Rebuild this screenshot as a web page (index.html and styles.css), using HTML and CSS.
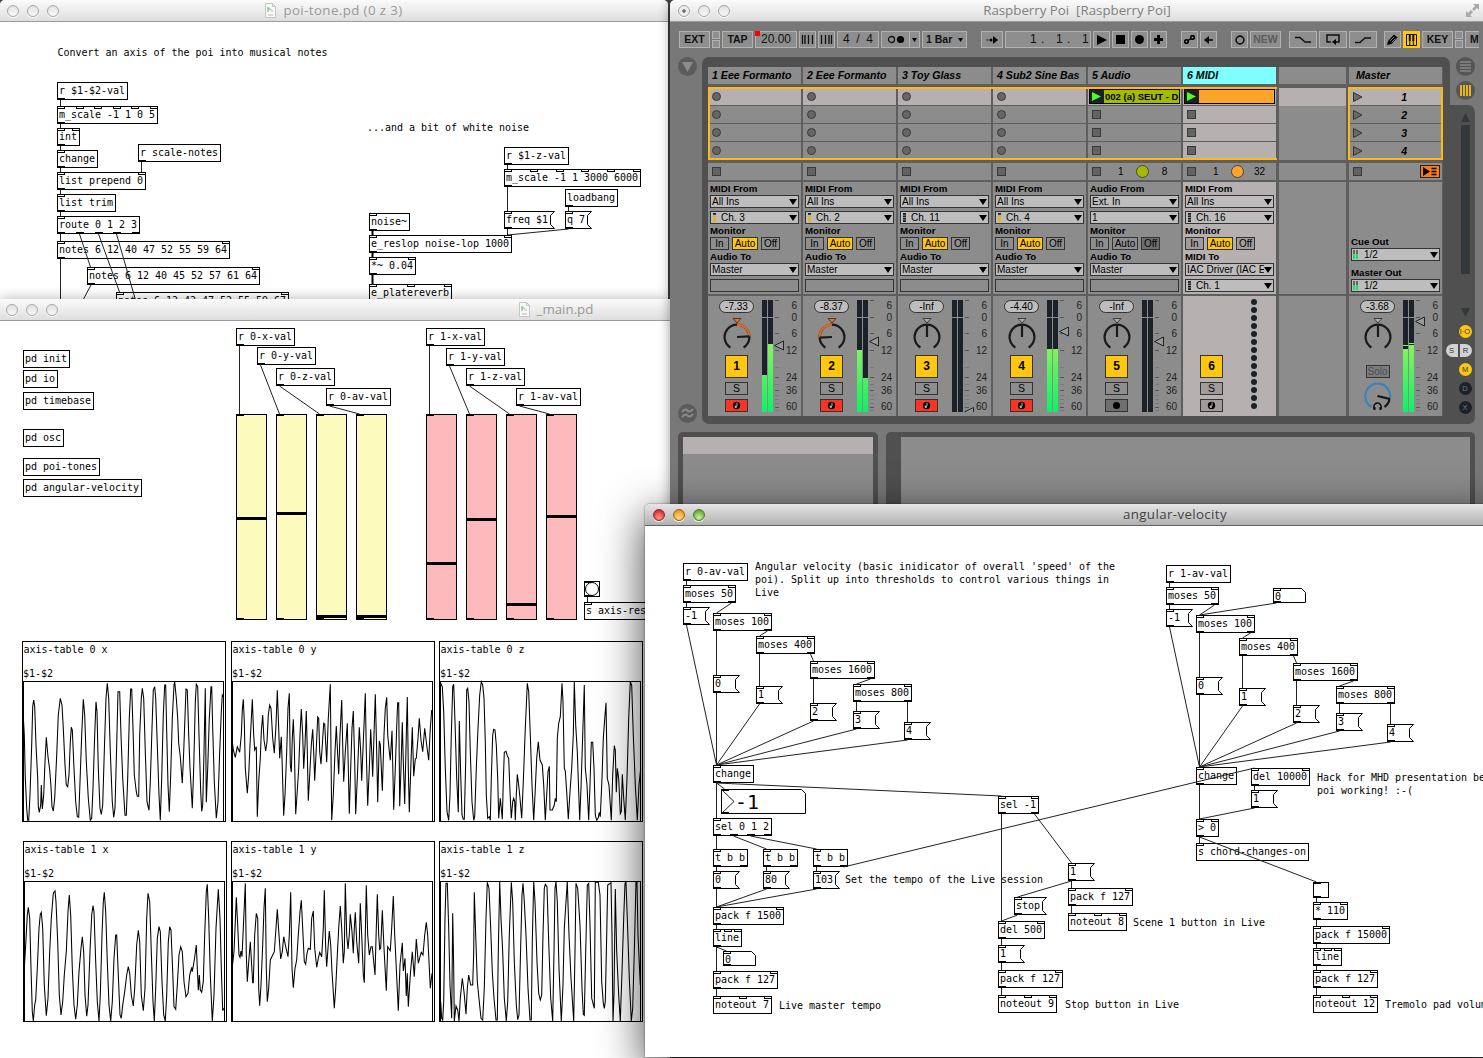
FILE: index.html
```html
<!DOCTYPE html>
<html lang="en">
<head>
<meta charset="utf-8">
<title>Desktop</title>
<link rel="stylesheet" href="styles.css">
</head>
<body>
<div class="desktop">

  <section class="window win-tone">
    <header class="titlebar">
      <div class="lights"><i></i><i></i><i></i></div>
      <h1><svg class="doc" width="11" height="15" viewBox="0 0 11 15"><path d="M.5.5h7l3 3v11H.5z" fill="#fafafa" stroke="#c4c4c4"/><path d="M7.500.5v3h3" fill="none" stroke="#c4c4c4"/><path d="M3 4v5M3 5l3 2" stroke="#8fc79a" fill="none" stroke-width="1.500"/><path d="M6 8h2M3 12h5" stroke="#b5b5b5"/></svg>poi-tone.pd (0 z 3)</h1>
    </header>
    <svg class="patch" id="patch-tone" viewBox="0 22 668 277" width="668" height="277"></svg>
  </section>

  <section class="window win-main">
    <header class="titlebar">
      <div class="lights"><i></i><i></i><i></i></div>
      <h1><svg class="doc" width="11" height="15" viewBox="0 0 11 15"><path d="M.5.5h7l3 3v11H.5z" fill="#fafafa" stroke="#c4c4c4"/><path d="M7.500.5v3h3" fill="none" stroke="#c4c4c4"/><path d="M3 4v5M3 5l3 2" stroke="#8fc79a" fill="none" stroke-width="1.500"/><path d="M6 8h2M3 12h5" stroke="#b5b5b5"/></svg>_main.pd</h1>
    </header>
    <svg class="patch" id="patch-main" viewBox="0 321 670 737" width="670" height="737"></svg>
  </section>

  <section class="window win-live">
    <header class="titlebar">
      <div class="lights"><i class="dirty"></i><i></i><i></i></div>
      <h1>Raspberry Poi&nbsp; [Raspberry Poi]</h1>
      <svg class="full" width="15" height="15" viewBox="0 0 15 15"><path d="M8 1h6v6l-2-2-3 3-2-2 3-3zM7 14H1V8l2 2 3-3 2 2-3 3z" fill="#a9a9a9"/></svg>
    </header>
    <div class="toolbar">
      <span class="b w31">EXT</span>
      <span class="nudge"><i></i><i></i></span>
      <span class="b w31">TAP</span>
      <span class="b w42 num tempo">20.00</span>
      <span class="b w17"><svg width="13" height="9"><path d="M1.500 0v9M4 0v9M7.500 0v9M11.500 0v9" stroke="#111" stroke-width="1.300"/></svg></span>
      <span class="b w17"><svg width="13" height="9"><path d="M1.500 0v9M5.500 0v9M9 0v9M11.500 0v9" stroke="#111" stroke-width="1.300"/></svg></span>
      <span class="b w42 num">4&nbsp; /&nbsp; 4</span>
      <span class="b w28 join"><svg width="18" height="9"><circle cx="4.500" cy="4.500" r="3" fill="none" stroke="#111" stroke-width="1.300"/><circle cx="13.500" cy="4.500" r="3.600"/></svg></span><span class="b w11 joined"><svg width="5" height="4"><path d="M0 0h5L2.500 4z"/></svg></span>
      <span class="b w45 spread">1 Bar <svg width="5" height="4"><path d="M0 0h5L2.500 4z"/></svg></span>
      <span class="b w22 gap-a"><svg width="14" height="8"><circle cx="2.500" cy="4" r="1.300" fill="#555"/><circle cx="6" cy="4" r="1.500"/><path d="M8 0l5 4-5 4z"/></svg></span>
      <span class="b w86 num pos"><span>1 .</span><span>1 .</span><span>1</span></span>
      <span class="b w17"><svg width="10" height="10"><path d="M0 0l10 5-10 5z"/></svg></span>
      <span class="b w17"><svg width="9" height="9"><path d="M0 0h9v9H0z"/></svg></span>
      <span class="b w17"><svg width="9" height="9"><circle cx="4.500" cy="4.500" r="4.500"/></svg></span>
      <span class="b w17"><svg width="9" height="9"><path d="M4.500 0v9M0 4.500h9" stroke="#000" stroke-width="3"/></svg></span>
      <span class="b w17 gap-a"><svg width="11" height="9"><circle cx="2.500" cy="6.500" r="1.800" fill="none" stroke="#000" stroke-width="1.600"/><circle cx="8.500" cy="2.500" r="1.800" fill="none" stroke="#000" stroke-width="1.600"/><path d="M4 5.500l3-2" stroke="#000" stroke-width="1.500"/></svg></span>
      <span class="b w17"><svg width="10" height="8"><path d="M9 4H3" stroke="#000" stroke-width="1.500"/><path d="M5 0v8L0 4z"/></svg></span>
      <span class="b w17 gap-a"><svg width="10" height="10"><circle cx="5" cy="5" r="3.900" fill="none" stroke="#111" stroke-width="1.600"/></svg></span>
      <span class="b w31 dim">NEW</span>
      <span class="b w28 gap-b"><svg width="16" height="8"><path d="M0 1.500h5l5 4.500h6" fill="none" stroke="#111" stroke-width="1.500"/></svg></span>
      <span class="b w28"><svg width="14" height="11"><path d="M5 8H1V1h12v7H9" fill="none" stroke="#111" stroke-width="1.500"/><path d="M10 5v6L6 8z"/></svg></span>
      <span class="b w28"><svg width="16" height="8"><path d="M0 6.500h5l5-4.500h6" fill="none" stroke="#111" stroke-width="1.500"/></svg></span>
      <span class="b w17 gap-c"><svg width="11" height="11"><path d="M0 11l1-4 6-6.500 3.500 3L4.500 10z"/><path d="M3 7l4-4M4.500 8.500l4-4" stroke="#999" stroke-width=".8"/></svg></span>
      <span class="b w17 on"><svg width="11" height="12"><path d="M.5.5h10v11H.5z" fill="none" stroke="#111"/><path d="M3.800 6.500V12M7.300 6.500V12" stroke="#111"/><path d="M3.800 0v7M7.300 0v7" stroke="#111" stroke-width="2"/></svg></span>
      <span class="b w31">KEY</span>
      <span class="nudge"><i></i><i></i></span>
      <span class="b last">M</span>
    </div>

    <div class="upper">
      <div class="gutter">
        <svg width="19" height="19"><circle cx="9.500" cy="9.500" r="9.500" fill="#5b5b5b"/><path d="M4 5h11l-5.500 10z" fill="#8b8b8b"/></svg>
        <svg width="19" height="19"><circle cx="9.500" cy="9.500" r="9.500" fill="#5b5b5b"/><path d="M4 8q3-4 5.500-1.500T15 5M4 13q3-4 5.500-1.500T15 10" fill="none" stroke="#8b8b8b" stroke-width="2"/></svg>
      </div>
      <div class="session">
        <div class="tracks" id="tracks"></div>
        <div class="scene-outline tracks-outline"></div>
        <div class="scene-outline master-outline"></div>
      </div>
      <div class="side">
        <div class="views">
          <svg width="19" height="19"><circle cx="9.500" cy="9.500" r="9.500" fill="#555"/><path d="M4 5h11M4 8h11M4 11h11M4 14h11" stroke="#858585" stroke-width="1.300"/></svg>
          <svg width="19" height="19"><circle cx="9.500" cy="9.500" r="9.500" fill="#555"/><path d="M5 4v11M8 4v11M11 4v11M14 4v11" stroke="#ffc70f" stroke-width="1.700"/></svg>
        </div>
        <div class="rail">
          <svg width="9" height="9"><path d="M0 9h9L4.500 0z" fill="#33383a"/></svg>
          <div class="scroll"></div>
          <svg width="9" height="9"><path d="M0 0h9L4.500 9z" fill="#33383a"/></svg>
          <b class="dot y">I·O</b>
          <div class="sr"><b>S</b><b>R</b></div>
          <b class="dot y">M</b>
          <b class="dot k">D</b>
          <b class="dot k">X</b>
        </div>
      </div>
    </div>
    <div class="lower">
      <div class="clipview"><div></div></div>
      <div class="devices"><div></div></div>
    </div>
  </section>

  <section class="window win-angular">
    <header class="titlebar active">
      <div class="lights"><i class="r"></i><i class="o"></i><i class="g"></i></div>
      <h1>angular-velocity</h1>
    </header>
    <svg class="patch" id="patch-angular" viewBox="645 526 838 531" width="838" height="531"></svg>
  </section>
</div>
<script src="app.js"></script>
</body>
</html>
```
FILE: styles.css
```css
* { box-sizing: border-box; }
body { margin: 0; font-family: "Liberation Sans", Arial, sans-serif; }
.desktop { position: relative; width: 1483px; height: 1058px; overflow: hidden; background: #4a4a4a; }

/* windows */
.window { position: absolute; background: #fff; overflow: hidden; border-radius: 5px 5px 0 0; }
.win-tone { left: 0; top: 0; width: 668px; height: 305px; box-shadow: 0 4px 14px rgba(0,0,0,.45); }
.win-main { left: 0; top: 299px; width: 670px; height: 759px; box-shadow: 0 0 12px rgba(0,0,0,.3); border-radius: 0; }
.win-live { left: 670px; top: 0; width: 830px; height: 620px; background: #787878; box-shadow: 0 0 12px rgba(0,0,0,.4); }
.win-angular { left: 645px; top: 504px; width: 860px; height: 553px; box-shadow: 0 12px 45px rgba(0,0,0,.75), 0 0 2px rgba(0,0,0,.6); }
.titlebar { height: 22px; display: flex; align-items: center; position: relative; background: linear-gradient(#fbfbfb, #dedede); border-bottom: 1px solid #9b9b9b; color: #999; }
.titlebar.active { background: linear-gradient(#e6e6e6, #b1b1b1); border-bottom-color: #636363; color: #444; }
.titlebar h1 { margin: 0; flex: 1; display: flex; justify-content: center; align-items: center; gap: 7px; font: 400 13.300px/21px "Open Sans", sans-serif; }
.win-live .titlebar { color: #808080; }
.win-tone .titlebar h1 { letter-spacing: .4px; }
.win-angular .titlebar h1 { flex: none; width: 1058px; letter-spacing: .38px; }
.lights { display: flex; gap: 8px; padding-left: 7px; margin-right: -59px; }
.lights i { width: 12px; height: 12px; border-radius: 50%; border: 1px solid #a5a5a5; background: linear-gradient(#e2e2e2, #f8f8f8); box-shadow: 0 1px 0 #fff; }
.win-main .lights { padding-left: 6px; }
.win-live .lights, .win-angular .lights { padding-left: 8px; }
.win-main h1 { padding-left: 443px; padding-right: 0; }
.win-main h1, .win-main .lights { flex-shrink: 0; }
.lights .dirty { background: radial-gradient(circle, #777 0 1.500px, #eee 2px); }
.lights .r { background: radial-gradient(circle at 50% 75%, #ff9b92, #e8403a 60%, #b3201c); border-color: #8e2a27; }
.lights .o { background: radial-gradient(circle at 50% 75%, #ffe08a, #f3a52f 60%, #c77b14); border-color: #96651f; }
.lights .g { background: radial-gradient(circle at 50% 75%, #cdf3a0, #76bb4b 60%, #4b8a2a); border-color: #4b7a30; }
.full { position: absolute; left: 795px; top: 3px; }
.win-live .titlebar h1 { flex: none; width: 812px; }

/* patches */
.patch { display: block; font: 10px "DejaVu Sans Mono", monospace; letter-spacing: -.02px; }
.patch text { fill: #000; white-space: pre; }
.box { fill: #fff; stroke: #000; }
.iolet { fill: #fff; stroke: #000; }
.outlet { fill: #000; }
.cord { stroke: #222; stroke-width: 1; fill: none; }
.cord.sig { stroke-width: 2; stroke: #000; }
.wave { fill: none; stroke: #000; stroke-width: 1.050; }
.frame { fill: none; stroke: #000; }
.big { font-size: 20px; }

/* toolbar */
.toolbar { display: flex; gap: 2px; padding: 9px 0 9px 9px; width: 809px; height: 35px; overflow: hidden; background: #787878; font-weight: 700; font-size: 10.500px; }
.b { flex: none; height: 17px; border: 1px solid #b2b2b2; background: #8e8e8e; display: flex; align-items: center; justify-content: center; color: #111; line-height: 15px; white-space: nowrap; }
.b svg { display: block; }
.w31 { width: 31px; } .w17 { width: 17px; } .w42 { width: 42px; } .w28 { width: 28px; } .w11 { width: 11px; }
.w45 { width: 45px; } .w22 { width: 22px; } .w86 { width: 86px; }
.join { width: 29px; } .joined { margin-left: -3px; }
.last { width: 14px; padding-left: 4px; border-right: 0; justify-content: flex-start; }
.num { font-weight: 400; font-size: 12px; }
.tempo { position: relative; justify-content: flex-end; padding-right: 5px; }
.tempo::before { content: ""; position: absolute; left: -1px; top: -1px; width: 5px; height: 5px; background: #f00; }
.spread { justify-content: space-between; padding: 0 3px; }
.pos { justify-content: flex-end; padding-right: 1px; word-spacing: 1px; }
.pos span { width: 26px; }
.pos span:last-child { width: 7px; }
.dim { color: #5c5c5c; }
.on { background: #ffc70f; border-color: #ffc70f; }
.gap-a { margin-left: 12px; } .gap-b { margin-left: 6px; } .gap-c { margin-left: 5px; }
.nudge { flex: none; width: 8px; display: flex; flex-direction: column; gap: 1px; }
.nudge i { height: 8px; border: 1px solid #b2b2b2; background: #8e8e8e; }

/* session view */
.upper { display: flex; height: 367px; }
.gutter { width: 32px; flex: none; display: flex; flex-direction: column; justify-content: space-between; padding: 0 0 1px 8px; }
.session { position: relative; width: 748px; flex: none; padding: 10px 6px 0; background: #505050; border-radius: 7px 7px 0 7px; }
.tracks { display: flex; gap: 2px; height: 349px; background: #5e5e5e; width: 735px; }
.track { width: 93px; flex: none; display: flex; flex-direction: column; }
.track > div { flex-shrink: 0; }
.track.blank { width: 67px; margin-left: 1px; }
.track.master { margin-left: 1px; }
.name { height: 17px; margin-bottom: 4px; padding-left: 4px; background: #8c8c8c; font: italic 700 10.600px/16px "Liberation Sans", sans-serif; white-space: nowrap; overflow: hidden; }
.track.sel .name { background: #7fffff; }
.slot { height: 17px; margin-bottom: 1px; padding-left: 4px; display: flex; align-items: center; background: #8c8c8c; }
.slot:nth-of-type(2) { background: #b6b0b0; }
.track.sel .slot, .track.sel .io, .track.sel .mix { background: #b6b0b0; }
.blank .slot { margin: 0; height: 18px; }
.sq { width: 9px; height: 9px; background: #636363; border: 1px solid #3a3a3a; flex: none; }
.ci { width: 9px; height: 9px; border-radius: 50%; background: #666; border: 1px solid #3a3a3a; }
.slot.clip { padding: 0 0 0 1px; }
.cl { display: flex; width: 91px; height: 15px; border: 1px solid #000; background: #1b2025; }
.cl b { flex: 1; font: 700 9.500px/13px "Liberation Sans", sans-serif; padding-left: 1px; overflow: hidden; white-space: nowrap; }
.cl svg { flex: none; }
.scene { justify-content: space-between; font: italic 700 10.500px/16px "Liberation Sans", sans-serif; padding-right: 35px; }
.stat { height: 17px; margin-top: 3px; margin-bottom: 2px; padding: 0 4px; display: flex; align-items: center; background: #8c8c8c; font-size: 10px; }
.stat .n1 { margin-left: 17px; width: 19px; }
.stat .pie { width: 13px; height: 13px; border-radius: 50%; border: 1px solid #444; margin-left: -1px; margin-right: 9px; }
.stat .n2 { min-width: 13px; text-align: center; }
.toarr { margin-left: auto; margin-right: -2px; width: 20px; height: 13px; border: 1px solid #222; background: #ff7b10; display: flex; align-items: center; justify-content: center; }
.io { height: 112px; margin-bottom: 2px; padding: 0 2px; background: #8c8c8c; font-size: 10px; }
.io label { display: block; height: 13px; font: 700 9.700px/13px "Liberation Sans", sans-serif; white-space: nowrap; }
.field { height: 13px; width: 89px; margin-bottom: 3px; border: 1px solid #333; background: #bdbdbd; display: flex; align-items: center; padding: 0 1px; line-height: 11px; white-space: nowrap; overflow: hidden; }
.field span { flex: 1; overflow: hidden; }
.field svg { flex: none; }
.field.empty { background: #8c8c8c; }
.sel .field.empty { background: #b6b0b0; }
.field + label { margin-top: -3px; }
.mon { display: flex; gap: 3px; }
.mon span { width: 19px; height: 13px; border: 1px solid #333; display: flex; justify-content: center; line-height: 11px; background: #8e8e8e; white-space: nowrap; }
.mon span:nth-child(2) { width: 26px; }
.mon .yes { background: #ffc70f; } .mon .dark { background: #6f6f6f; }
.sel .mon span:not(.yes) { background: #a09c9c; }
.master .io { padding-top: 53px; }
.master .field + label { margin-top: 5px; }
.mix { height: 120px; display: flex; background: #8c8c8c; font-size: 10px; }
.strip { width: 54px; padding: 4px 0 0 3px; display: flex; flex-direction: column; align-items: center; }
.pill { width: 35px; height: 13px; border: 1px solid #333; border-radius: 7px; background: #bdbdbd; text-align: center; line-height: 11px; }
.strip .knob { margin: 4px 0 5px; flex: none; }
.act { width: 23px; height: 23px; border: 1px solid #333; background: #ffc70f; font: 700 12px/20px "Liberation Sans", sans-serif; text-align: center; margin-bottom: 4px; }
.solo, .arm { width: 23px; height: 13px; border: 1px solid #333; background: #8e8e8e; font-size: 10.500px; line-height: 11px; text-align: center; margin-bottom: 4px; display: flex; justify-content: center; align-items: center; }
.sel .solo, .sel .arm { background: #a09c9c; }
.arm.hot { background: #ff3322; } .arm.off { background: #6f6f6f; }
.solo.cue { width: 24px; background: #7c7c7c; color: #505050; margin: 10px 0 3px; font-size: 10px; }
.meter { display: block; font-size: 10px; }
.mix .spacer { height: 55px; flex: none; }
.scene-outline { position: absolute; top: 30px; height: 73px; border: 2px solid #ffb910; }
.tracks-outline { left: 6px; width: 569px; border-right: 0; }
.master-outline { left: 646px; width: 95px; }

.side { width: 25px; flex: none; display: flex; flex-direction: column; position: relative; }
.views { height: 48px; display: flex; flex-direction: column; align-items: flex-end; gap: 5px; }
.rail { height: 319px; background: #505050; border-radius: 0 7px 7px 0; display: flex; flex-direction: column; align-items: center; padding: 8px 0 0 5px; }
.rail svg { flex: none; }
.scroll { width: 9px; height: 149px; background: #33383a; margin: 3px 0 34px; flex: none; }
.dot { width: 13px; height: 13px; border-radius: 50%; font: 400 7.500px/13px "Liberation Sans", sans-serif; display: flex; justify-content: center; margin-top: 6px; flex: none; }
.rail svg + .dot { margin-top: 8px; }
.dot.y { background: #ffc70f; color: #333; } .dot.k { background: #1b2128; color: #777; }
.sr { display: flex; gap: 2px; margin: 6px 0 0 -13px; flex: none; }
.sr b { width: 12px; height: 13px; background: #d2d2d2; color: #333; font: 400 7.500px/13px "Liberation Sans", sans-serif; text-align: center; border-radius: 7px 0 0 7px; }
.sr b + b { border-radius: 0 7px 7px 0; }

.lower { display: flex; gap: 8px; padding: 8px 0 0 8px; height: 200px; }
.clipview { width: 200px; flex: none; padding: 5px 5px 0; background: #505050; border-radius: 5px 5px 0 0; }
.clipview div { height: 190px; border-top: 17px solid #b6b0b0; background: #8c8c8c; }
.devices { width: 589px; flex: none; padding: 5px 5px 0 15px; background: #505050; border-radius: 5px 5px 0 0; }
.devices div { height: 190px; background: #8c8c8c; }
```
FILE: app.js
```js
/* ---------- Patch drawing ---------- */
const H = 17;
const esc = s => s.replace(/&/g, "&amp;").replace(/</g, "&lt;").replace(/>/g, "&gt;");

function ports(x, w, n) {
  return Array.from({ length: n }, (_, i) => Math.round(x + (n > 1 ? (w - 7) * i / (n - 1) : 0)));
}

// node: [id, kind, x, y, text, inlets, outlets]
function drawPatch(id, nodes, cords, extra) {
  const map = {};
  let boxes = "", lines = "";
  for (const [key, kind, x, y, text, ni, no] of nodes) {
    let w = Math.max(text.length, kind === "msg" ? 3 : 1) * 6 + 4, h = H;
    if (kind === "num") { w = 32; h = 14; }
    if (kind === "bignum") { w = 84; h = 24; }
    if (kind === "bang" || kind === "tgl") { w = 15; h = 15; }
    if (kind.startsWith("slider")) { w = 30; h = 205; }
    const X = x + .5, Y = y + .5, R = X + w, B = Y + h;
    if (kind === "msg") boxes += `<path class="box" d="M${X} ${Y}H${R + 4}L${R} ${Y + 4}V${B - 4}L${R + 4} ${B}H${X}Z"/>`;
    else if (kind === "num" || kind === "bignum") boxes += `<path class="box" d="M${X} ${Y}H${R - 4}L${R} ${Y + 4}V${B}H${X}Z"/>`;
    else if (kind.startsWith("slider")) {
      const [, color, bar] = kind.split(" ");
      boxes += `<rect class="box" x="${X}" y="${Y}" width="${w}" height="${h}" style="fill:${color}"/><rect x="${x + 1}" y="${bar}" width="${w}" height="3"/>`;
    } else boxes += `<rect class="box" x="${X}" y="${Y}" width="${w}" height="${h}"/>`;
    if (kind === "bang") boxes += `<circle class="box" cx="${X + 7.5}" cy="${Y + 7.5}" r="6.500"/>`;
    const solid = kind === "bang" || kind === "tgl" || kind.startsWith("slider") || kind === "bignum";
    const ins = ports(x, w, ni), outs = ports(x, w, no);
    ins.forEach(p => boxes += solid ? `<rect class="outlet" x="${p}" y="${y}" width="8" height="2"/>` : `<rect class="iolet" x="${p + .5}" y="${Y}" width="7" height="2"/>`);
    outs.forEach(p => boxes += `<rect class="outlet" x="${p}" y="${y + h - 1}" width="8" height="2"/>`);
    if (kind === "bignum") boxes += `<path class="cord" d="M${X} ${Y}l12.500 12-12.500 12"/><text class="big" x="${x + 14}" y="${y + 20}">${text}</text>`;
    else if (text) boxes += `<text x="${x + 2}" y="${y + (kind === "num" ? 11.5 : 12)}">${esc(text)}</text>`;
    map[key] = { ins, outs, y, b: y + h + 1 };
  }
  for (const c of cords.trim().split(/\s+/)) {
    const sig = c[0] === "~";
    const [a, b] = c.replace("~", "").split(">");
    const [an, ai] = a.split("."), [bn, bi] = b.split(".");
    const p = map[an], q = map[bn], x1 = p.outs[ai || 0] + 3.5, x2 = q.ins[bi || 0] + 3.5;
    lines += `<path class="cord${sig ? " sig" : ""}" d="M${x1} ${p.b}L${x2} ${q.y}"/>`;
  }
  document.getElementById(id).innerHTML = boxes + lines + (extra || "");
}
const note = (x, y, s) => `<text x="${x}" y="${y}">${esc(s)}</text>`;
const line = (a, b, c, d) => `<path class="cord" d="M${a} ${b}L${c} ${d}"/>`;

drawPatch("patch-tone", [
  ["a", "obj", 57, 82, "r $1-$2-val", 0, 1], ["b", "obj", 57, 106, "m_scale -1 1 0 5", 6, 1],
  ["c", "obj", 57, 128, "int", 2, 1], ["d", "obj", 57, 150, "change", 1, 1],
  ["e", "obj", 138, 144, "r scale-notes", 0, 1], ["f", "obj", 57, 172, "list prepend 0", 2, 1],
  ["g", "obj", 57, 194, "list trim", 1, 1], ["h", "obj", 57, 216, "route 0 1 2 3", 1, 5],
  ["i", "obj", 57, 241, "notes 6 12 40 47 52 55 59 64", 2, 1],
  ["j", "obj", 87, 267, "notes 6 12 40 45 52 57 61 64", 2, 1],
  ["k", "obj", 116, 292, "notes 6 12 42 47 52 55 59 67", 2, 1],
  ["l", "obj", 504, 147, "r $1-z-val", 0, 1], ["m", "obj", 504, 169, "m_scale -1 1 3000 6000", 6, 1],
  ["n", "obj", 565, 189, "loadbang", 0, 1], ["o", "msg", 504, 211, "freq $1", 1, 1],
  ["p", "msg", 565, 211, "q 7", 1, 1], ["q", "obj", 369, 213, "noise~", 1, 1],
  ["r", "obj", 369, 235, "e_reslop noise-lop 1000", 2, 1], ["s", "obj", 369, 257, "*~ 0.04", 2, 1],
  ["t", "obj", 369, 284, "e_platereverb", 3, 2]
], "a>b b>c c>d d>f e>f.1 f>g g>h h>i h.1>j h.2>k l>m m>o n>p o>r.1 p>r.1 ~q>r ~r>s ~s>t",
  line(60.5, 259, 60.5, 300) + line(91, 285, 83, 300) + line(116.5, 234, 135.5, 300) +
  note(57.5, 56, "Convert an axis of the poi into musical notes") + note(367, 131, "...and a bit of white noise"));

/* table plots: points are in thirds of a pixel, y measured from 635 */
function wave(ox, pts) {
  return `<polyline class="wave" points="${pts.trim().split(/\s+/).map(p => {
    const [x, y] = p.split(",").map(Number);
    return (ox + x / 3).toFixed(1) + "," + Math.min(635 + y / 3, y > 600 ? 1021 : 821).toFixed(1);
  }).join(" ")}"/>`;
}
function table(x, y, name) {
  return `<rect class="frame" x="${x + .5}" y="${y + .5}" width="203" height="180"/>` +
    `<rect class="frame" x="${x + 1.5}" y="${y + 40.5}" width="200" height="140"/>` +
    note(x + 1.5, y + 12, name) + note(x + 1, y + 36, "$1-$2");
}
const w0x = "70,245 73,300 76,430 80,520 83,556 86,556 90,480 95,330 98,215 101,195 104,215 108,330 113,430 115,515 118,532 122,510 124,450 127,522 131,480 135,380 139,307 144,365 149,405 153,455 156,515 160,528 164,490 170,360 175,240 181,190 186,210 190,280 195,390 199,450 203,455 207,420 211,320 214,277 217,285 222,400 227,500 232,545 236,547 240,440 245,300 250,193 254,240 259,380 265,490 271,556 275,550 279,460 284,300 288,200 291,230 295,400 300,520 304,538 308,510 313,350 318,190 322,145 326,190 331,350 337,500 341,547 345,520 350,330 354,170 359,170 363,300 368,430 375,541 379,541 383,430 388,250 392,162 395,162 399,280 403,420 409,470 412,484 416,484 419,300 424,190 427,160 431,190 436,350 441,500 447,526 451,440 456,280 460,165 464,155 467,190 472,330 477,480 481,556 485,430 490,240 494,150 497,150 500,290 504,450 508,530 512,420 517,250 522,150 524,140 529,190 533,250 536,325 541,365 547,445 551,350 556,220 558,162 562,165 566,300 570,400 577,520 581,400 586,200 589,148 593,155 597,300 602,470 605,529 608,510 612,350 616,160 619,502 623,400 628,250 633,155 635,155 638,280 643,440 649,550 654,500 659,350 664,230 667,180 670,185";
const w0y = "696,310 700,345 706,367 712,335 719,352 724,300 727,225 730,193 733,260 736,400 742,475 746,420 750,330 755,230 757,193 761,300 764,345 769,335 772,545 776,440 781,370 784,290 788,240 792,315 797,348 801,320 805,240 809,210 813,220 818,310 823,355 828,270 832,166 836,280 839,370 844,305 847,400 851,542 855,480 860,350 864,220 868,175 871,390 874,412 877,310 880,253 883,330 887,538 891,480 896,400 900,300 904,222 908,300 911,401 915,330 919,228 922,350 925,497 929,420 934,330 938,283 941,350 944,437 949,340 953,246 956,250 959,350 963,388 967,330 971,265 974,267 980,382 985,250 991,148 995,556 1000,480 1005,350 1009,273 1013,360 1016,418 1020,300 1025,195 1028,330 1031,440 1036,350 1042,265 1045,400 1048,536 1052,400 1056,280 1060,228 1064,380 1067,538 1072,430 1078,277 1082,350 1085,437 1090,320 1096,175 1099,350 1103,512 1108,400 1112,283 1115,350 1118,425 1122,300 1126,178 1130,350 1133,502 1138,318 1141,330 1147,467 1152,300 1156,220 1160,187 1163,300 1169,360 1171,376 1176,287 1181,524 1186,400 1191,250 1193,203 1196,203 1199,514 1203,400 1207,262 1210,380 1214,507 1219,300 1222,186 1225,400 1228,532 1233,380 1237,277 1241,424 1246,372 1249,370 1254,310 1258,250 1263,315 1268,350 1274,280 1280,330 1286,376 1291,280 1295,225";
const w0z = "362,145 367,155 371,230 376,400 381,530 386,556 390,480 394,300 398,155 401,148 405,260 410,430 415,532 418,258 422,420 426,540 430,553 433,553 437,380 440,165 443,160 447,200 451,350 456,500 461,556 464,545 469,400 474,280 479,180 484,140 488,150 492,190 496,320 499,480 503,550 508,545 511,556 514,430 518,300 521,283 525,285 529,330 533,430 536,550 541,490 547,553 550,440 553,352 558,349 562,362 566,370 570,470 574,550 578,500 581,490 584,500 586,556 589,480 592,418 596,450 600,490 605,550 610,440 616,280 622,145 626,170 631,300 636,450 641,556 645,480 650,370 655,320 660,375 667,390 671,450 676,556 680,480 684,410 688,394 690,525 697,525 703,510 706,490 709,500 712,310 716,265 721,245 726,145 729,200 733,400 736,408 740,470 745,553 750,470 755,400 760,300 763,140 767,270 772,350 779,556 783,460 788,300 793,150 796,400 801,450 806,556 810,450 814,322 818,322 822,400 826,540 830,556 835,548 838,532 841,545 846,430 850,310 855,240 858,203 862,430 867,450 874,556 878,420 883,332 886,345 889,472 892,400 896,430 901,536 904,530 907,418 911,490 916,556 921,430 926,250 931,140 935,150 940,300 946,450 952,556 957,450 962,400";
const w1x = "73,1000 77,930 82,840 85,817 89,850 93,1000 97,1130 100,1158 104,1110 107,1095 112,1000 117,880 121,838 124,832 128,880 133,1050 139,1142 144,1090 149,950 154,850 160,775 165,768 168,800 173,920 178,1080 183,1140 188,1100 193,1020 199,950 204,830 208,780 212,840 217,1000 222,1110 227,1153 232,1110 237,1010 243,940 247,905 251,950 255,1080 260,1144 264,1110 270,950 275,840 279,812 282,830 287,980 292,1100 297,1158 301,1080 306,900 310,800 313,772 317,830 322,980 327,1110 332,1158 337,1100 342,970 347,900 350,900 355,1020 360,1140 364,1150 368,1110 374,1070 380,1020 385,995 389,1015 394,1080 400,1113 404,1060 410,930 415,886 419,920 424,1080 430,1127 435,1060 440,850 444,775 449,800 454,950 459,1100 463,1158 467,1060 472,910 477,875 481,890 486,1040 491,1140 496,1158 500,1080 505,920 509,875 513,885 518,1010 522,1115 527,1123 532,1050 537,960 542,935 547,950 552,1040 558,1085 564,1075 569,1020 575,997 577,1010 583,975 589,930 592,1000 595,1066 598,1020 601,1065 605,1072 610,1040 614,900 619,770 622,748 626,850 631,1020 637,1158 642,1080 648,880 655,763 660,850 664,1000 668,1127 671,1120";
const w1y = "697,995 702,950 706,860 709,787 713,870 717,960 720,967 723,948 726,965 730,880 736,745 739,960 742,1040 747,970 751,920 758,1043 760,1043 764,900 769,835 773,850 776,1060 779,1112 783,1050 788,930 792,820 796,760 799,1000 802,1100 806,1060 811,975 818,960 823,950 828,880 832,823 837,900 842,972 847,950 851,905 857,935 864,965 868,900 872,772 876,1000 880,1058 885,1000 890,975 895,900 900,830 904,796 908,880 913,980 917,988 921,955 925,940 931,943 935,850 940,828 944,940 950,997 955,970 959,952 965,965 970,880 973,766 977,940 980,995 984,940 988,888 992,930 996,1010 1003,1120 1007,1060 1012,960 1016,880 1021,813 1025,880 1030,985 1033,950 1036,745 1040,900 1044,942 1048,900 1051,838 1056,890 1060,955 1063,880 1066,832 1070,920 1076,985 1081,805 1085,900 1090,1020 1093,1043 1099,751 1103,900 1108,960 1113,935 1117,935 1121,980 1125,1020 1129,880 1132,778 1136,900 1139,943 1142,940 1147,826 1152,940 1159,1067 1163,935 1171,947 1175,880 1180,783 1184,900 1189,1000 1195,1127 1200,990 1207,923 1210,1008 1215,970 1219,1083 1222,1015 1225,1115 1231,1020 1237,950 1243,1025 1249,912 1255,985 1260,965 1264,952 1269,960 1274,900 1279,862 1283,900 1287,980 1291,1060 1296,1015";
const w1z = "362,1100 365,1150 368,1155 371,1100 375,850 378,745 382,745 386,880 390,1050 395,1150 398,835 401,1000 403,1158 408,1113 413,1125 417,1158 421,1090 427,1030 432,1070 438,1138 442,1060 446,1020 452,1050 458,1050 461,950 463,772 467,900 472,1040 478,1100 483,1150 488,1155 493,1060 498,850 502,742 507,760 512,880 517,1010 522,1090 528,1155 532,1155 535,950 539,740 543,850 548,950 553,1090 559,1158 563,1100 568,900 574,742 578,800 583,980 589,1110 593,1154 597,1140 601,980 606,780 609,745 613,800 618,900 624,1060 630,1155 634,1155 637,920 641,740 645,800 651,980 656,1075 661,1095 665,1080 669,900 673,760 676,748 681,755 686,920 692,1090 698,1158 702,950 705,760 708,740 712,800 717,1000 724,1158 729,1050 733,880 738,800 742,740 747,900 753,1030 761,1158 765,950 768,745 773,760 780,870 786,1060 790,1138 793,1141 797,950 802,750 806,745 810,870 815,1090 823,1120 826,742 835,742 840,780 845,1040 850,1105 853,1120 856,1100 860,900 863,750 873,743 876,900 879,1158 882,1080 886,762 890,950 896,1080 901,1158 906,1010 911,850 915,745 918,742 922,850 928,1030 934,1158 938,1120 943,950 948,742 951,742 954,900 961,1050";

const Y = "#fcfabc", P = "#fcbabc";
drawPatch("patch-main", [
  ["p1", "obj", 23, 350, "pd init", 0, 0], ["p2", "obj", 23, 370, "pd io", 0, 0],
  ["p3", "obj", 23, 392, "pd timebase", 0, 0], ["p4", "obj", 23, 429, "pd osc", 0, 0],
  ["p5", "obj", 23, 458, "pd poi-tones", 0, 0], ["p6", "obj", 23, 479, "pd angular-velocity", 0, 0],
  ["a", "obj", 236, 328, "r 0-x-val", 0, 1], ["b", "obj", 257, 347, "r 0-y-val", 0, 1],
  ["c", "obj", 276, 368, "r 0-z-val", 0, 1], ["d", "obj", 326, 388, "r 0-av-val", 0, 1],
  ["e", "obj", 426, 328, "r 1-x-val", 0, 1], ["f", "obj", 446, 348, "r 1-y-val", 0, 1],
  ["g", "obj", 466, 368, "r 1-z-val", 0, 1], ["h", "obj", 516, 388, "r 1-av-val", 0, 1],
  ["s1", `slider ${Y} 517`, 236, 414, "", 1, 1], ["s2", `slider ${Y} 512`, 276, 414, "", 1, 1],
  ["s3", `slider ${Y} 615`, 316, 414, "", 1, 1], ["s4", `slider ${Y} 615`, 356, 414, "", 1, 1],
  ["s5", `slider ${P} 562`, 426, 414, "", 1, 1], ["s6", `slider ${P} 518`, 466, 414, "", 1, 1],
  ["s7", `slider ${P} 603`, 506, 414, "", 1, 1], ["s8", `slider ${P} 515`, 546, 414, "", 1, 1],
  ["bn", "bang", 584, 581, "", 1, 1], ["ar", "obj", 584, 602, "s axis-reset", 1, 0]
], "a>s1 b>s2 c>s3 d>s4 e>s5 f>s6 g>s7 h>s8 bn>ar",
  table(22, 641, "axis-table 0 x") + table(231, 641, "axis-table 0 y") + table(439, 641, "axis-table 0 z") +
  table(23, 841, "axis-table 1 x") + table(231, 841, "axis-table 1 y") + table(439, 841, "axis-table 1 z") +
  wave(0, w0x) + wave(0, w0y) + wave(320, w0z) + wave(0, w1x) + wave(0, w1y) + wave(320, w1z));

// both poi share the same threshold cascade, shifted by (dx, dy)
function cascade(k, dx, dy) {
  return [["r", "obj", 683, 563, `r ${k}-av-val`, 0, 1], ["m50", "obj", 683, 585, "moses 50", 2, 2],
    ["neg", "msg", 683, 607, "-1", 1, 1], ["m100", "obj", 713, 613, "moses 100", 2, 2],
    ["m400", "obj", 756, 636, "moses 400", 2, 2], ["m1600", "obj", 810, 661, "moses 1600", 2, 2],
    ["m800", "obj", 853, 684, "moses 800", 2, 2], ["v0", "msg", 713, 675, "0", 1, 1],
    ["v1", "msg", 756, 686, "1", 1, 1], ["v2", "msg", 810, 703, "2", 1, 1],
    ["v3", "msg", 853, 711, "3", 1, 1], ["v4", "msg", 904, 722, "4", 1, 1],
    ["ch", "obj", 713, 765, "change", 1, 1]
  ].map(([id, kind, x, y, ...rest]) => [k + id, kind, x + dx, y + dy, ...rest]);
}
const cascadeCords = k => "r>m50 m50>neg m50.1>m100 m100>v0 m100.1>m400 m400>v1 m400.1>m1600 m1600>v2 m1600.1>m800 m800>v3 m800.1>v4 neg>ch v0>ch v1>ch v2>ch v3>ch v4>ch"
  .split(" ").map(c => c.split(">").map(p => k + p).join(">")).join(" ");

drawPatch("patch-angular", [
  ...cascade(0, 0, 0), ...cascade(1, 483, 2),
  ["big", "bignum", 721, 789, "-1", 1, 1], ["sel", "obj", 713, 818, "sel 0 1 2", 1, 4],
  ["t1", "obj", 713, 849, "t b b", 1, 2], ["t2", "obj", 763, 849, "t b b", 1, 2], ["t3", "obj", 813, 849, "t b b", 1, 2],
  ["n0", "msg", 713, 871, "0", 1, 1], ["n80", "msg", 763, 871, "80", 1, 1], ["n103", "msg", 813, 871, "103", 1, 1],
  ["pk", "obj", 713, 907, "pack f 1500", 2, 1], ["ln", "obj", 713, 929, "line", 3, 1],
  ["at", "num", 723, 951, "0", 1, 1], ["pk2", "obj", 713, 971, "pack f 127", 2, 1], ["no7", "obj", 713, 996, "noteout 7", 3, 0],
  ["seln", "obj", 998, 796, "sel -1", 2, 2], ["stop", "msg", 1014, 897, "stop", 1, 1],
  ["del", "obj", 998, 921, "del 500", 2, 1], ["one", "msg", 998, 945, "1", 1, 1],
  ["pk3", "obj", 998, 970, "pack f 127", 2, 1], ["no9", "obj", 998, 995, "noteout 9", 3, 0],
  ["sc", "msg", 1068, 863, "1", 1, 1], ["pk4", "obj", 1068, 888, "pack f 127", 2, 1], ["no8", "obj", 1068, 913, "noteout 8", 3, 0],
  ["an", "num", 1273, 588, "0", 1, 1], ["del2", "obj", 1251, 768, "del 10000", 2, 1], ["d1", "msg", 1251, 790, "1", 1, 1],
  ["gt", "obj", 1196, 819, "> 0", 2, 1], ["scc", "obj", 1196, 843, "s chord-changes-on", 1, 0],
  ["tg", "tgl", 1313, 882, "", 1, 1], ["mul", "obj", 1313, 902, "* 110", 2, 1], ["pk5", "obj", 1313, 926, "pack f 15000", 2, 1],
  ["ln2", "obj", 1313, 948, "line", 3, 1], ["pk6", "obj", 1313, 970, "pack f 127", 2, 1], ["no12", "obj", 1313, 995, "noteout 12", 3, 0]
], cascadeCords(0) + " " + cascadeCords(1) +
  " 0ch>big 0ch>sel 0ch>seln sel>t1 sel.1>t2 sel.2>t3 t1>n0 t2>n80 t3>n103 n0>pk n80>pk n103>pk pk>ln ln>at ln>pk2 pk2>no7" +
  " seln>del seln.1>sc sc>stop sc>pk4 pk4>no8 stop>del del>one one>pk3 pk3>no9 t3.1>del2 an>1m100 1ch>gt del2>d1 d1>gt gt>scc gt>tg" +
  " tg>mul mul>pk5 pk5>ln2 ln2>pk6 pk6>no12",
  note(755, 570, "Angular velocity (basic inidicator of overall 'speed' of the") +
  note(755, 583, "poi). Split up into thresholds to control various things in") + note(755, 596, "Live") +
  note(845, 883, "Set the tempo of the Live session") + note(779, 1009, "Live master tempo") +
  note(1065, 1008, "Stop button in Live") + note(1133, 926, "Scene 1 button in Live") +
  note(1317, 781, "Hack for MHD presentation be") + note(1317, 794, "poi working! :-(") + note(1385, 1008, "Tremolo pad volum"));

/* ---------- Mixer ---------- */
const arrow = `<svg width="8" height="6"><path d="M0 0h8L4 6z"/></svg>`;
const chan = lit => `<svg width="9" height="9">${[0, 1, 2, 3].map(i => `<rect x="1" y="${i * 2.4}" width="3" height="1.800" fill="${lit && i ? "#e8b010" : "#1b2025"}"/>`).join("")}</svg>`;
const stereo = `<svg width="11" height="9"><path d="M0 1h2M3 1h2M0 3h2M3 3h2" stroke="#111" stroke-width="1.200"/><path d="M0 4h2v5H0zM3 4h2v5H3z" fill="#1fe05c"/></svg>`;
const field = (t, icon) => t ? `<div class="field">${icon || ""}<span>${t}</span>${arrow}</div>` : `<div class="field empty"></div>`;

function polar(deg, r) { const a = deg * Math.PI / 180; return `${(14 + r * Math.sin(a)).toFixed(1)} ${(20 - r * Math.cos(a)).toFixed(1)}`; }
function knob(pan) {
  const end = pan === 0 ? "" : `<path d="M${polar(Math.min(0, pan), 12.4)}A12.400 12.400 0 0 1 ${polar(Math.max(0, pan), 12.4)}" fill="none" stroke="#e26a1b" stroke-width="2.200"/>`;
  return `<svg class="knob" width="28" height="33"><path d="M${polar(-148, 12.4)}A12.400 12.400 0 1 1 ${polar(148, 12.4)}" fill="none" stroke="#1a1a1a" stroke-width="2.200"/>${end}` +
    `<path d="M14 20L${polar(pan, 12.4)}" stroke="#1a1a1a" stroke-width="2.200"/><path d="M10 1.500h8L14 6z" fill="${pan ? "#ff6a00" : "#aaa"}" stroke="#333" stroke-width=".9"/></svg>`;
}
function meter(l, r, handle, peaks) {
  let s = `<svg class="meter" width="39" height="120"><defs><linearGradient id="lvl" gradientUnits="userSpaceOnUse" x1="0" y1="50" x2="0" y2="116"><stop offset="0" stop-color="#86f35e"/><stop offset="1" stop-color="#0af264"/></linearGradient></defs>` +
    `<rect x="0" y="4" width="5" height="112" fill="#1b2128"/><rect x="6" y="4" width="5" height="112" fill="#1b2128"/>` +
    `<rect x="0" y="${l}" width="5" height="${116 - l}" fill="url(#lvl)"/><rect x="6" y="${r}" width="5" height="${116 - r}" fill="url(#lvl)"/>` +
    `<path d="M0 21.500h5M6 21.500h5" stroke="#8c8c8c"/>`;
  if (peaks) s += `<path d="M0 49.500h5M6 47.500h5" stroke="#86f35e"/>`;
  for (const y of [4, 21, 37, 54, 81, 94, 111]) s += `<path d="M13 ${y + .5}h4" stroke="#555"/>`;
  for (const y of [71, 88, 99, 103, 107, 114]) s += `<path d="M13 ${y + .5}h4" stroke="#777"/>`;
  [[6, 13], [0, 25], [6, 41], [12, 58], [24, 85], [36, 98], [60, 114]].forEach(([t, y]) => s += `<text x="35" y="${y - .5}" text-anchor="end" fill="#222">${t}</text>`);
  const grip = handle >= 116 ? `M12.500 116l9-4.500v4.500` : `M12.500 ${handle}l9-4.500v9z`;
  return s + `<path d="${grip}" fill="#999" stroke="#222"/></svg>`;
}
const noteIcon = `<svg width="9" height="9"><circle cx="4.500" cy="4.500" r="3.700"/><path d="M5 1.500v3.500" stroke="#bbb"/><circle cx="3.800" cy="5.800" r="1.200" fill="#bbb"/></svg>`;
const dotIcon = `<svg width="9" height="9"><circle cx="4.500" cy="4.500" r="3.500"/></svg>`;
const play = `<svg width="14" height="13"><path d="M2 2l9 4.500L2 11z" fill="#4dff28"/></svg>`;

const tracks = [
  { n: 1, name: "1 Eee Formanto", ch: "Ch. 3", lit: 1, db: "-7.33", pan: 87, m: [79, 48, 49.5] },
  { n: 2, name: "2 Eee Formanto", ch: "Ch. 2", lit: 1, db: "-8.37", pan: -93, m: [54, 82, 45.5] },
  { n: 3, name: "3 Toy Glass", ch: "Ch. 11", db: "-Inf", pan: 0, m: [116, 116, 116] },
  { n: 4, name: "4 Sub2 Sine Bas", ch: "Ch. 4", lit: 1, db: "-4.40", pan: 0, m: [53, 53, 35.5] },
  { n: 5, name: "5 Audio", audio: 1, db: "-Inf", pan: 0, m: [116, 116, 45.5] },
  { n: 6, name: "6 MIDI", sel: 1 }
];

function trackHtml(t) {
  const launch = t.audio || t.sel;
  const btn = launch ? `<i class="sq"></i>` : `<i class="ci"></i>`;
  const clip = t.audio ? `<div class="slot clip"><div class="cl">${play}<b style="background:#a4bb00">002 (a) SEUT - D</b></div></div>`
    : t.sel ? `<div class="slot clip"><div class="cl">${play}<b style="background:#ffa42b"></b></div></div>` : `<div class="slot">${btn}</div>`;
  const stat = t.audio ? `<span class="n1">1</span><i class="pie" style="background:#a4bb00"></i><span class="n2">8</span>`
    : t.sel ? `<span class="n1">1</span><i class="pie" style="background:#ffa42b"></i><span class="n2">32</span>` : "";
  const mon = `<div class="mon"><span>In</span><span class="${t.audio ? "" : "yes"}">Auto</span><span class="${t.audio ? "dark" : ""}">Off</span></div>`;
  const io = t.audio
    ? `<label>Audio From</label>${field("Ext. In")}${field("1")}<label>Monitor</label>${mon}<label>Audio To</label>${field("Master")}${field()}`
    : `<label>MIDI From</label>${field("All Ins")}${field(t.ch || "Ch. 16", chan(t.lit))}<label>Monitor</label>${mon}` +
      (t.sel ? `<label>MIDI To</label>${field("IAC Driver (IAC E")}${field("Ch. 1", chan())}` : `<label>Audio To</label>${field("Master")}${field()}`);
  const mixer = t.sel
    ? `<div class="strip"><div class="spacer"></div><b class="act">6</b><div class="solo">S</div><div class="arm">${noteIcon}</div></div>` +
      `<svg width="39" height="120">${Array.from({ length: 14 }, (_, i) => `<circle cx="17" cy="${6 + i * 8}" r="3" fill="#1b2128"/>`).join("")}</svg>`
    : `<div class="strip"><div class="pill">${t.db}</div>${knob(t.pan)}<b class="act">${t.n}</b><div class="solo">S</div>` +
      `<div class="arm ${t.audio ? "off" : "hot"}">${t.audio ? dotIcon : noteIcon}</div></div>${meter(...t.m)}`;
  return `<div class="track${t.sel ? " sel" : ""}"><div class="name">${t.name}</div>${clip}` +
    `<div class="slot">${btn}</div>`.repeat(3) + `<div class="stat"><i class="sq"></i>${stat}</div><div class="io">${io}</div><div class="mix">${mixer}</div></div>`;
}
const tri = `<svg width="10" height="10"><path d="M.5.5l8.500 4.500-8.500 4.500z" fill="#6b6b6b" stroke="#333"/></svg>`;
const cueKnob = `<svg width="30" height="30"><path d="M8.500 26A12.500 12.500 0 1 1 27 17" fill="none" stroke="#3682c4" stroke-width="2"/><path d="M14.500 15l12.500 3" stroke="#111" stroke-width="2.200"/><path d="M26.500 18a12 12 0 0 1-5 8" fill="none" stroke="#1a1a1a" stroke-width="2.200"/><path d="M12 28.500a3.700 3.700 0 1 1 5 0" fill="none" stroke="#111" stroke-width="1.500"/><path d="M11.500 26v3M17.500 26v3" stroke="#111" stroke-width="2"/></svg>`;
const master = `<div class="track master"><div class="name">&nbsp;Master</div>` +
  [1, 2, 3, 4].map(i => `<div class="slot scene">${tri}<span>${i}</span></div>`).join("") +
  `<div class="stat"><i class="sq"></i><span class="toarr"><svg width="15" height="9"><path d="M0 0l7 4.500L0 9z"/><path d="M8.500 1.500h5M8.500 4.500h5M8.500 7.500h5" stroke="#000" stroke-width="1.300"/></svg></span></div>` +
  `<div class="io"><label>Cue Out</label>${field("1/2", stereo)}<label>Master Out</label>${field("1/2", stereo)}</div>` +
  `<div class="mix"><div class="strip"><div class="pill">-3.68</div>${knob(0)}<div class="solo cue">Solo</div>${cueKnob}</div>${meter(53, 49, 25.5, true)}</div></div>`;
const blank = `<div class="track blank"><div class="name"></div>${`<div class="slot"></div>`.repeat(4)}<div class="stat"></div><div class="io"></div><div class="mix"></div></div>`;
document.getElementById("tracks").innerHTML = tracks.map(trackHtml).join("") + blank + master;
```
